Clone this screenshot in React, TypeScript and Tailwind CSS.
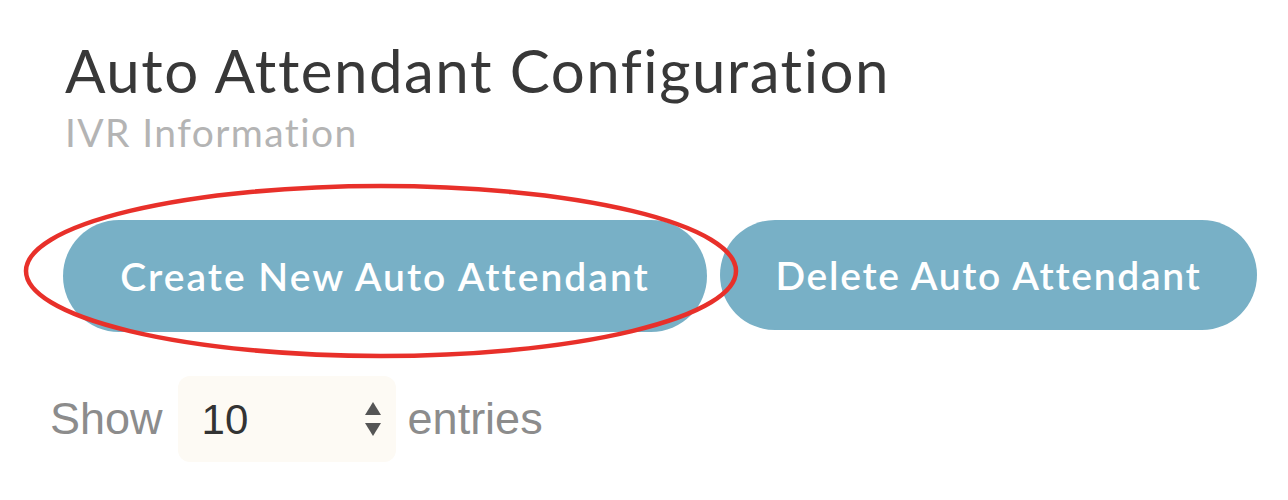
import React from "react";

export default function App() {
  return (
    <div className="relative w-[1288px] h-[500px] bg-white overflow-hidden">
      <div className="pl-[63px] pt-[34px]">
        <h1
          className="pl-[2px] text-[60px] leading-[72px] tracking-[1.5px] text-[#383838] font-normal"
          style={{ fontFamily: "Lato, 'Noto Sans', sans-serif" }}
        >
          Auto Attendant Configuration
        </h1>
        <p
          className="pl-[2px] mt-[3px] text-[39px] leading-[47px] tracking-[1.4px] text-[#b4b4b4] font-normal"
          style={{ fontFamily: "Lato, 'Noto Sans', sans-serif" }}
        >
          IVR Information
        </p>
        <div className="mt-[64px] flex gap-[13px]">
          <button
            className="w-[644px] h-[112px] rounded-full bg-[#78b0c6] text-white text-[39px] tracking-[2px] font-semibold flex items-center justify-center"
            style={{ fontFamily: "Lato, 'Noto Sans', sans-serif" }}
          >
            Create New Auto Attendant
          </button>
          <button
            className="w-[537px] h-[110px] rounded-full bg-[#78b0c6] text-white text-[39px] tracking-[1.7px] font-semibold flex items-center justify-center"
            style={{ fontFamily: "Lato, 'Noto Sans', sans-serif" }}
          >
            Delete Auto Attendant
          </button>
        </div>
      </div>
      <div
        className="mt-[44px] pl-[50px] flex items-center"
        style={{ fontFamily: "'Liberation Sans', Arial, sans-serif" }}
      >
        <span className="text-[45px] text-[#8c8c8c]">Show</span>
        <div className="ml-[15px] w-[218px] h-[86px] rounded-[12px] bg-[#fdfaf4] flex items-center pl-[24px] pr-[12px]">
          <span className="text-[42px] text-[#333333] flex-1">10</span>
          <svg width="18" height="36" viewBox="0 0 18 36" className="mr-[2px]">
            <path d="M9 1 L17 14 L1 14 Z" fill="#555555" />
            <path d="M1 22 L17 22 L9 35 Z" fill="#555555" />
          </svg>
        </div>
        <span className="ml-[12px] text-[45px] text-[#8c8c8c]">entries</span>
      </div>
      <svg
        className="absolute left-0 top-0 pointer-events-none"
        width="1288"
        height="500"
        viewBox="0 0 1288 500"
      >
        <ellipse
          cx="381"
          cy="271"
          rx="355"
          ry="85"
          fill="none"
          stroke="#e8302a"
          strokeWidth="4.5"
        />
      </svg>
    </div>
  );
}
